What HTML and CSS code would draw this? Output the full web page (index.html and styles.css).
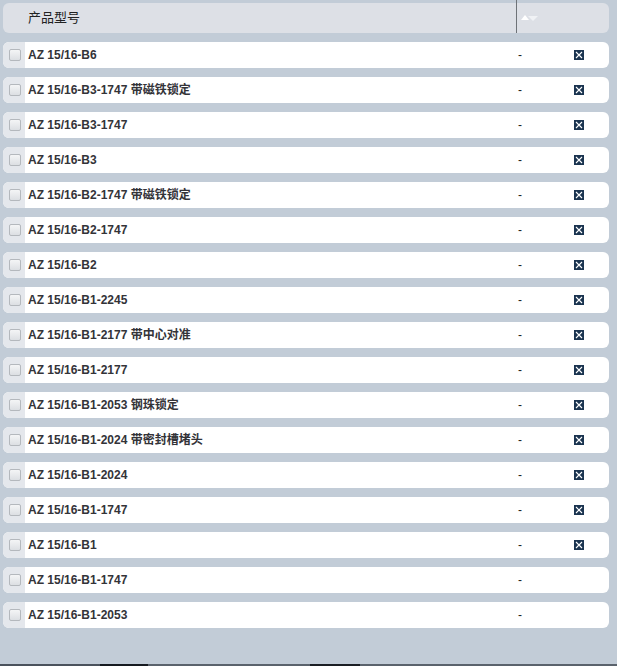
FILE: index.html
```html
<!DOCTYPE html>
<html lang="zh">
<head>
<meta charset="utf-8">
<link rel="stylesheet" href="styles.css">
</head>
<body>
<div class="page">
  <div class="head">
    <div class="head-title">产品型号</div>
    <div class="head-sort">
      <span class="tri-up"></span><span class="tri-down"></span>
    </div>
  </div>
  <div class="list">
    <div class="row"><div class="chk"><span class="box"></span></div><div class="name">AZ 15/16-B6</div><div class="dash">-</div><div class="del"><svg class="x" viewBox="0 0 10 10"><rect width="10" height="10" fill="#1b3450"/><path d="M2 2L8 8M8 2L2 8" stroke="#fff" stroke-width="1.1"/></svg></div></div>
    <div class="row"><div class="chk"><span class="box"></span></div><div class="name">AZ 15/16-B3-1747 带磁铁锁定</div><div class="dash">-</div><div class="del"><svg class="x" viewBox="0 0 10 10"><rect width="10" height="10" fill="#1b3450"/><path d="M2 2L8 8M8 2L2 8" stroke="#fff" stroke-width="1.1"/></svg></div></div>
    <div class="row"><div class="chk"><span class="box"></span></div><div class="name">AZ 15/16-B3-1747</div><div class="dash">-</div><div class="del"><svg class="x" viewBox="0 0 10 10"><rect width="10" height="10" fill="#1b3450"/><path d="M2 2L8 8M8 2L2 8" stroke="#fff" stroke-width="1.1"/></svg></div></div>
    <div class="row"><div class="chk"><span class="box"></span></div><div class="name">AZ 15/16-B3</div><div class="dash">-</div><div class="del"><svg class="x" viewBox="0 0 10 10"><rect width="10" height="10" fill="#1b3450"/><path d="M2 2L8 8M8 2L2 8" stroke="#fff" stroke-width="1.1"/></svg></div></div>
    <div class="row"><div class="chk"><span class="box"></span></div><div class="name">AZ 15/16-B2-1747 带磁铁锁定</div><div class="dash">-</div><div class="del"><svg class="x" viewBox="0 0 10 10"><rect width="10" height="10" fill="#1b3450"/><path d="M2 2L8 8M8 2L2 8" stroke="#fff" stroke-width="1.1"/></svg></div></div>
    <div class="row"><div class="chk"><span class="box"></span></div><div class="name">AZ 15/16-B2-1747</div><div class="dash">-</div><div class="del"><svg class="x" viewBox="0 0 10 10"><rect width="10" height="10" fill="#1b3450"/><path d="M2 2L8 8M8 2L2 8" stroke="#fff" stroke-width="1.1"/></svg></div></div>
    <div class="row"><div class="chk"><span class="box"></span></div><div class="name">AZ 15/16-B2</div><div class="dash">-</div><div class="del"><svg class="x" viewBox="0 0 10 10"><rect width="10" height="10" fill="#1b3450"/><path d="M2 2L8 8M8 2L2 8" stroke="#fff" stroke-width="1.1"/></svg></div></div>
    <div class="row"><div class="chk"><span class="box"></span></div><div class="name">AZ 15/16-B1-2245</div><div class="dash">-</div><div class="del"><svg class="x" viewBox="0 0 10 10"><rect width="10" height="10" fill="#1b3450"/><path d="M2 2L8 8M8 2L2 8" stroke="#fff" stroke-width="1.1"/></svg></div></div>
    <div class="row"><div class="chk"><span class="box"></span></div><div class="name">AZ 15/16-B1-2177 带中心对准</div><div class="dash">-</div><div class="del"><svg class="x" viewBox="0 0 10 10"><rect width="10" height="10" fill="#1b3450"/><path d="M2 2L8 8M8 2L2 8" stroke="#fff" stroke-width="1.1"/></svg></div></div>
    <div class="row"><div class="chk"><span class="box"></span></div><div class="name">AZ 15/16-B1-2177</div><div class="dash">-</div><div class="del"><svg class="x" viewBox="0 0 10 10"><rect width="10" height="10" fill="#1b3450"/><path d="M2 2L8 8M8 2L2 8" stroke="#fff" stroke-width="1.1"/></svg></div></div>
    <div class="row"><div class="chk"><span class="box"></span></div><div class="name">AZ 15/16-B1-2053 钢珠锁定</div><div class="dash">-</div><div class="del"><svg class="x" viewBox="0 0 10 10"><rect width="10" height="10" fill="#1b3450"/><path d="M2 2L8 8M8 2L2 8" stroke="#fff" stroke-width="1.1"/></svg></div></div>
    <div class="row"><div class="chk"><span class="box"></span></div><div class="name">AZ 15/16-B1-2024 带密封槽堵头</div><div class="dash">-</div><div class="del"><svg class="x" viewBox="0 0 10 10"><rect width="10" height="10" fill="#1b3450"/><path d="M2 2L8 8M8 2L2 8" stroke="#fff" stroke-width="1.1"/></svg></div></div>
    <div class="row"><div class="chk"><span class="box"></span></div><div class="name">AZ 15/16-B1-2024</div><div class="dash">-</div><div class="del"><svg class="x" viewBox="0 0 10 10"><rect width="10" height="10" fill="#1b3450"/><path d="M2 2L8 8M8 2L2 8" stroke="#fff" stroke-width="1.1"/></svg></div></div>
    <div class="row"><div class="chk"><span class="box"></span></div><div class="name">AZ 15/16-B1-1747</div><div class="dash">-</div><div class="del"><svg class="x" viewBox="0 0 10 10"><rect width="10" height="10" fill="#1b3450"/><path d="M2 2L8 8M8 2L2 8" stroke="#fff" stroke-width="1.1"/></svg></div></div>
    <div class="row"><div class="chk"><span class="box"></span></div><div class="name">AZ 15/16-B1</div><div class="dash">-</div><div class="del"><svg class="x" viewBox="0 0 10 10"><rect width="10" height="10" fill="#1b3450"/><path d="M2 2L8 8M8 2L2 8" stroke="#fff" stroke-width="1.1"/></svg></div></div>
    <div class="row"><div class="chk"><span class="box"></span></div><div class="name">AZ 15/16-B1-1747</div><div class="dash">-</div><div class="del"></div></div>
    <div class="row"><div class="chk"><span class="box"></span></div><div class="name">AZ 15/16-B1-2053</div><div class="dash">-</div><div class="del"></div></div>
  </div>
</div>
<div class="bottom-strip"></div>
</body>
</html>
```

FILE: styles.css
```css
html, body {
  margin: 0;
  padding: 0;
  background: #c2ccd7;
  height: 666px;
  overflow: hidden;
}
body {
  font-family: "Liberation Sans", "Noto Sans CJK SC", sans-serif;
  position: relative;
}
.page {
  padding: 3px 8px 0 3px;
  height: 661px;
  box-sizing: border-box;
}
.head {
  height: 30px;
  background: #dde0e6;
  border-radius: 6px;
  display: flex;
  align-items: stretch;
}
.head-title {
  width: 488px;
  padding-left: 25px;
  display: flex;
  align-items: center;
  font-size: 13px;
  line-height: 16px;
  color: #222;
  border-right: 1px solid #6e7378;
  margin-top: -3px;
  padding-top: 3px;
}
.head-sort {
  display: flex;
  align-items: center;
  padding-left: 4px;
  padding-bottom: 1px;
}
.tri-up {
  width: 0;
  height: 0;
  border-left: 4px solid transparent;
  border-right: 4px solid transparent;
  border-bottom: 5px solid #ffffff;
  margin-top: -1px;
}
.tri-down {
  width: 0;
  height: 0;
  border-left: 5px solid transparent;
  border-right: 5px solid transparent;
  border-top: 5px solid #f0f2f5;
  margin-left: -1px;
  margin-top: 1px;
}
.list {
  display: flex;
  flex-direction: column;
  gap: 9px;
  margin-top: 9px;
}
.row {
  height: 26px;
  display: flex;
  align-items: center;
  background: #ffffff;
  border-radius: 6px;
  overflow: hidden;
}
.chk {
  width: 22px;
  height: 26px;
  background: #e4e7ec;
  display: flex;
  align-items: center;
  justify-content: center;
  flex-shrink: 0;
}
.box {
  width: 10px;
  height: 10px;
  border: 1px solid #b4b8bd;
  border-radius: 2px;
  background: linear-gradient(#f4f5f6, #dcdfe3);
  margin-left: 1px;
}
.name {
  width: 490px;
  padding-left: 3px;
  font-size: 12px;
  line-height: 14px;
  height: 14px;
  font-weight: bold;
  color: #333338;
  white-space: nowrap;
  flex-shrink: 0;
  overflow: visible;
}
.dash {
  width: 22px;
  font-size: 12px;
  line-height: 14px;
  color: #222;
  flex-shrink: 0;
}
.del {
  flex: 1;
  display: flex;
  align-items: center;
  padding-left: 34px;
}
.x {
  width: 10px;
  height: 10px;
  display: block;
}
.bottom-strip {
  position: absolute;
  left: 0;
  right: 0;
  bottom: 0;
  height: 2px;
  background: linear-gradient(90deg, #4a525c 0, #4a525c 100px, #161a20 100px, #161a20 148px, #5a626c 148px, #5a626c 310px, #1a1e24 310px, #1a1e24 360px, #5a626c 360px);
}
```
